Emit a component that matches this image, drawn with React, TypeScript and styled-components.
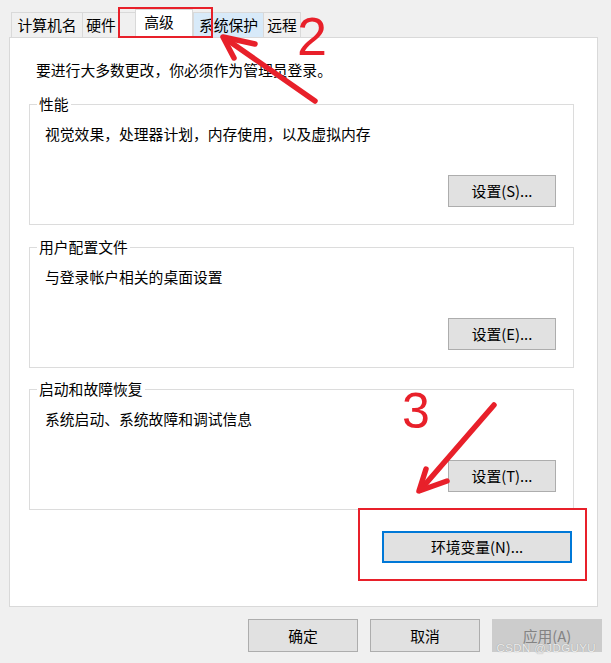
import React from "react";
import styled, { createGlobalStyle } from "styled-components";

const Global = createGlobalStyle`
  html, body { margin: 0; padding: 0; background: #f0f0f0; }
  body { font-family: "Noto Sans CJK SC", "Noto Sans", sans-serif; color: #000; }
`;

const Page = styled.div`
  position: relative;
  width: 611px;
  height: 663px;
  overflow: hidden;
  background: #f0f0f0;
  font-size: 14.8px;
  line-height: 20px;
`;

const TabRow = styled.div`
  position: relative;
  z-index: 2;
  display: flex;
  align-items: flex-end;
  height: 38px;
  margin-left: 11px;
  margin-bottom: -1px;
`;

const Tab = styled.div<{ $w: number; $hover?: boolean }>`
  box-sizing: border-box;
  width: ${(p) => p.$w}px;
  height: 26px;
  border: 1px solid #d9d9d9;
  border-right: none;
  background: ${(p) => (p.$hover ? "#d8eaf9" : "#f0f0f0")};
  display: flex;
  align-items: center;
  justify-content: center;
  padding-bottom: 1px;
  white-space: nowrap;
  &:last-child { border-right: 1px solid #d9d9d9; }
`;

const TabGap = styled.div<{ $w: number }>`
  width: ${(p) => p.$w}px;
  height: 26px;
  box-sizing: border-box;
  border-top: 1px solid #d9d9d9;
  border-bottom: 1px solid #d9d9d9;
`;

const ActiveTab = styled.div<{ $w: number }>`
  box-sizing: border-box;
  width: ${(p) => p.$w}px;
  height: 29px;
  background: #fff;
  border: 1px solid #d9d9d9;
  border-bottom: none;
  display: flex;
  align-items: center;
  justify-content: center;
  padding-right: 10px;
  padding-bottom: 5px;
`;

const Panel = styled.div`
  box-sizing: border-box;
  margin-left: 9px;
  width: 589px;
  height: 570px;
  background: #fff;
  border: 1px solid #d9d9d9;
  padding: 22px 23px 0 19px;
  display: flex;
  flex-direction: column;
`;

const Intro = styled.div`
  margin-left: 7px;
  height: 20px;
`;

const Group = styled.div<{ $top: number }>`
  position: relative;
  box-sizing: border-box;
  margin-top: ${(p) => p.$top}px;
  width: 545px;
  height: 121px;
  border: 1px solid #dcdcdc;
  padding: 19px 17px 17px 15px;
  display: flex;
  flex-direction: column;
  justify-content: space-between;
`;

const Legend = styled.span`
  position: absolute;
  top: -11px;
  left: 7px;
  padding: 0 2px;
  background: #fff;
  line-height: 20px;
`;

const ButtonRow = styled.div<{ $pr?: number }>`
  display: flex;
  justify-content: flex-end;
  gap: 12px;
  padding-right: ${(p) => p.$pr ?? 0}px;
`;

const Button = styled.div<{ $w: number; $h?: number; $focus?: boolean; $disabled?: boolean }>`
  box-sizing: border-box;
  width: ${(p) => p.$w}px;
  height: ${(p) => p.$h ?? 32}px;
  background: ${(p) => (p.$disabled ? "#cccccc" : "#e1e1e1")};
  border: ${(p) => (p.$focus ? "2px solid #0078d7" : p.$disabled ? "1px solid #cccccc" : "1px solid #adadad")};
  color: ${(p) => (p.$disabled ? "#838383" : "#000")};
  display: flex;
  align-items: center;
  justify-content: center;
  white-space: nowrap;
`;

const EnvRow = styled(ButtonRow)`
  margin-top: 21px;
`;

const Footer = styled(ButtonRow)`
  margin-top: 12px;
  padding-right: 9px;
`;

const Watermark = styled.div`
  position: absolute;
  right: 15px;
  bottom: 8px;
  font-family: "Liberation Sans", Arial, sans-serif;
  font-size: 11.5px;
  line-height: 14px;
  letter-spacing: 0.4px;
  color: #ededed;
  text-shadow: 0 0 1px #8a8a8a;
`;

const Overlay = styled.svg`
  position: absolute;
  left: 0;
  top: 0;
  pointer-events: none;
  z-index: 5;
`;

const RED = "#e8202a";

export default function App() {
  return (
    <Page>
      <Global />
      <TabRow>
        <Tab $w={71}>计算机名</Tab>
        <Tab $w={37}>硬件</Tab>
        <TabGap $w={16} />
        <ActiveTab $w={58}>高级</ActiveTab>
        <Tab $w={70} $hover>系统保护</Tab>
        <Tab $w={38}>远程</Tab>
      </TabRow>
      <Panel>
        <Intro>要进行大多数更改，你必须作为管理员登录。</Intro>
        <Group $top={24}>
          <Legend>性能</Legend>
          <div>视觉效果，处理器计划，内存使用，以及虚拟内存</div>
          <ButtonRow>
            <Button $w={108}>设置(S)...</Button>
          </ButtonRow>
        </Group>
        <Group $top={22}>
          <Legend>用户配置文件</Legend>
          <div>与登录帐户相关的桌面设置</div>
          <ButtonRow>
            <Button $w={108}>设置(E)...</Button>
          </ButtonRow>
        </Group>
        <Group $top={21}>
          <Legend>启动和故障恢复</Legend>
          <div>系统启动、系统故障和调试信息</div>
          <ButtonRow>
            <Button $w={108}>设置(T)...</Button>
          </ButtonRow>
        </Group>
        <EnvRow $pr={2}>
          <Button $w={190} $focus>环境变量(N)...</Button>
        </EnvRow>
      </Panel>
      <Footer>
        <Button $w={110} $h={33}>确定</Button>
        <Button $w={110} $h={33}>取消</Button>
        <Button $w={110} $h={33} $disabled>应用(A)</Button>
      </Footer>
      <Watermark>CSDN @JDGUYU</Watermark>
      <Overlay width={611} height={663} viewBox="0 0 611 663">
        <rect x={119} y={8} width={93} height={29} fill="none" stroke={RED} strokeWidth={2} />
        <rect x={359} y={509} width={227} height={71} fill="none" stroke={RED} strokeWidth={2} />
        <g stroke={RED} strokeWidth={5.5} strokeLinecap="round" strokeLinejoin="round" fill="none">
          <line x1={315} y1={101} x2={226} y2={39} />
          <polyline points="234,58 223,37 255,44" />
          <line x1={494} y1={405} x2={422} y2={488} />
          <polyline points="426,469 419,491 447,481" />
        </g>
        <text x={297} y={55} fill={RED} fontFamily="'Liberation Sans', Arial, sans-serif" fontSize={54}>2</text>
        <text x={402} y={428} fill={RED} fontFamily="'Liberation Sans', Arial, sans-serif" fontSize={50}>3</text>
      </Overlay>
    </Page>
  );
}
